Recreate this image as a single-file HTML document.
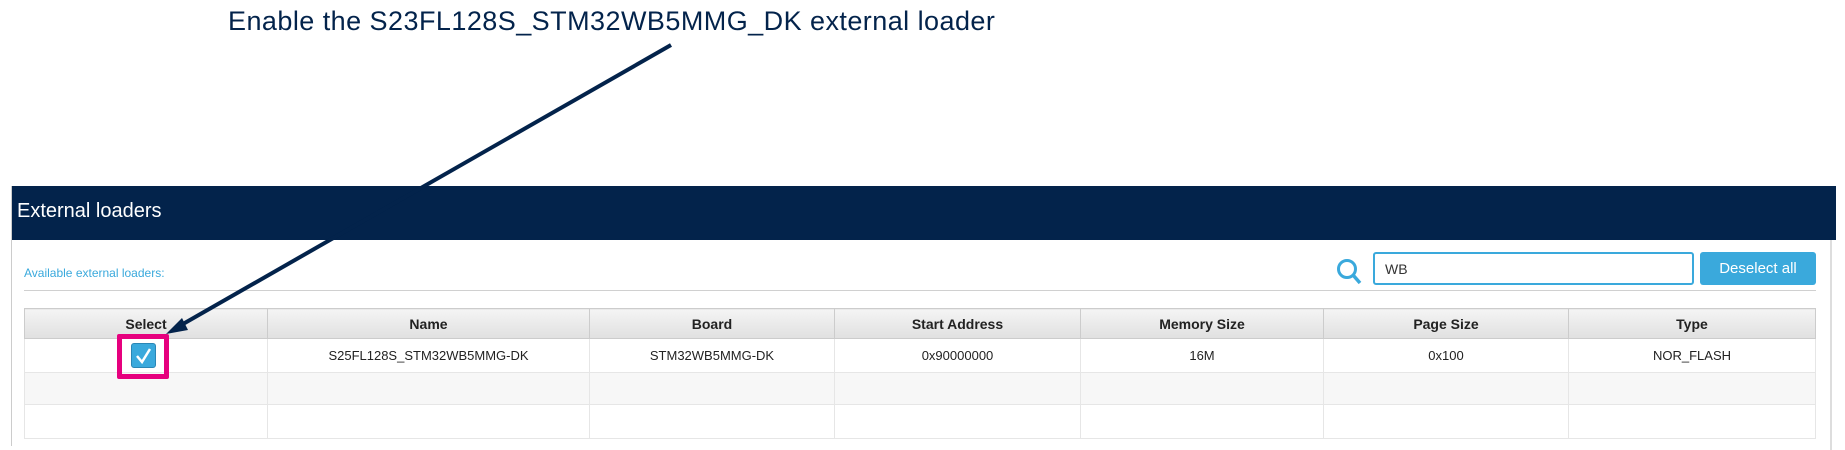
<!DOCTYPE html>
<html><head><meta charset="utf-8"><style>
*{margin:0;padding:0;box-sizing:border-box}
body{width:1845px;height:426px;background:#fff;position:relative;overflow:hidden;font-family:"Liberation Sans",sans-serif}
.title{position:absolute;left:228px;top:6px;font-size:27px;color:#03234b;white-space:nowrap;letter-spacing:0.45px}
.panel{position:absolute;left:11px;top:186px;width:1825px;height:260px;border-left:1px solid #ccc}
.hdr{position:absolute;left:0;top:0;width:100%;height:54px;background:#03234b;color:#fff;font-size:20px;padding:14px 5px}
.avail{position:absolute;left:12px;top:80px;font-size:12px;color:#3aa9dc}
.sep{position:absolute;left:12px;top:104px;width:1792px;height:1px;background:#d0d0d0}
.rb{position:absolute;left:1818px;top:54px;width:2px;height:210px;background:#ddd}
.input{position:absolute;left:1361px;top:66px;width:321px;height:33px;border:2px solid #3aa9dc;border-radius:3px;font-size:14px;padding:7px 10px;color:#333}
.btn{position:absolute;left:1688px;top:66px;width:116px;height:33px;background:#3aa9dc;border-radius:3px;color:#fff;font-size:15px;text-align:center;line-height:33px}
table{position:absolute;left:12px;top:122px;width:1792px;border-collapse:collapse;table-layout:fixed;font-size:13px;color:#222}
th{height:30px;background:linear-gradient(#f4f4f4,#e0e0e0);border:1px solid #ccc;font-weight:bold;font-size:14px}
td{border:1px solid #e6e6e6;text-align:center;height:34px}
tr.r2 td{background:#f7f7f7;height:32px}
</style></head><body>
<div class="title">Enable the S23FL128S_STM32WB5MMG_DK external loader</div>
<div class="panel">
<div class="hdr">External loaders</div>
<div class="avail">Available external loaders:</div>
<div class="sep"></div>
<div class="rb"></div>
<svg style="position:absolute;left:1324px;top:72px" width="28" height="28" viewBox="0 0 28 28"><circle cx="11" cy="11" r="8.5" fill="none" stroke="#3aa9dc" stroke-width="3"/><path d="M17 17 L24 25" stroke="#3aa9dc" stroke-width="3.5"/></svg>
<div class="input">WB</div>
<div class="btn">Deselect all</div>
<table>
<colgroup><col style="width:243px"><col style="width:322px"><col style="width:245px"><col style="width:246px"><col style="width:243px"><col style="width:245px"><col></colgroup>
<tr><th>Select</th><th>Name</th><th>Board</th><th>Start Address</th><th>Memory Size</th><th>Page Size</th><th>Type</th></tr>
<tr><td></td><td>S25FL128S_STM32WB5MMG-DK</td><td>STM32WB5MMG-DK</td><td>0x90000000</td><td>16M</td><td>0x100</td><td>NOR_FLASH</td></tr>
<tr class="r2"><td></td><td></td><td></td><td></td><td></td><td></td><td></td></tr>
<tr><td></td><td></td><td></td><td></td><td></td><td></td><td></td></tr>
</table>
</div>
<div style="position:absolute;left:117px;top:334px;width:52px;height:45px;border:5px solid #e6007e;border-radius:2px"></div>
<div style="position:absolute;left:131px;top:343px;width:25px;height:25px;background:#3aa9dc;border:1px solid #2a86b5;border-radius:3px"></div>
<svg style="position:absolute;left:131px;top:343px" width="25" height="25"><path d="M6 13 L11 19 L19 6" fill="none" stroke="#fff" stroke-width="2.5"/></svg>
<svg style="position:absolute;left:0;top:0" width="1845" height="426"><line x1="671" y1="45" x2="176" y2="328" stroke="#03234b" stroke-width="4"/><path d="M166 334 L182 318 L188 330 Z" fill="#03234b"/></svg>
</body></html>
